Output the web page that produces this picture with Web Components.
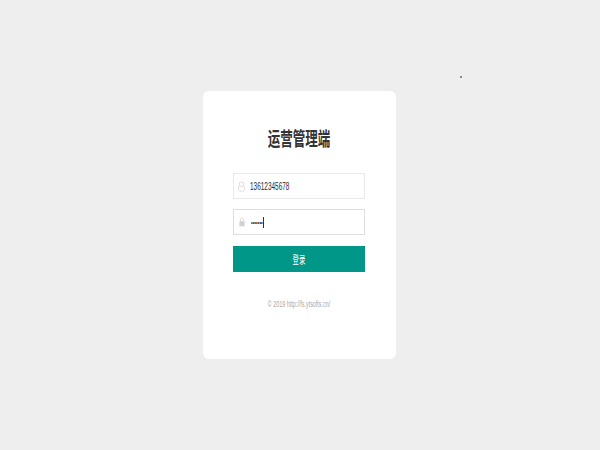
<!DOCTYPE html>
<html>
<head>
<meta charset="utf-8">
<style>
  html, body { margin: 0; height: 100%; background: #eeeeee; }
  body { display: flex; align-items: center; justify-content: center; font-family: "Liberation Sans", "Noto Sans CJK SC", sans-serif; }
</style>
</head>
<body>
<login-card>
  <login-field value="13612345678">
    <svg slot="icon" width="7" height="11" viewBox="0 0 8 12" fill="none" stroke="#d9d9de" stroke-width="1"><circle cx="4" cy="3.4" r="2.6"/><path d="M1.6 5.4C.8 6.4.5 7.6.5 9c0 1.700 1 2.500 3.500 2.500S7.500 10.700 7.500 9c0-1.400-.3-2.600-1.100-3.600"/></svg>
  </login-field>
  <login-field value="•••••••" focused>
    <svg slot="icon" width="6" height="10" viewBox="0 0 7 11"><path d="M1.800 5V2.800a1.700 1.700 0 0 1 3.400 0V5" fill="none" stroke="#e3d3d6" stroke-width="1"/><rect x=".5" y="4.500" width="6" height="6" rx=".6" fill="#d2cfd0"/></svg>
  </login-field>
  <login-button>登录</login-button>
</login-card>
<speck-dot></speck-dot>

<script>
class LoginCard extends HTMLElement {
  constructor() {
    super();
    this.attachShadow({ mode: 'open' });
    this.shadowRoot.innerHTML = `
      <style>
        :host {
          display: block;
          box-sizing: border-box;
          width: 193px;
          height: 268px;
          padding: 36px 31px 0 30px;
          background: #fff;
          border-radius: 6px;
          margin-left: -1px;
        }
        h1 {
          margin: 0 0 20px;
          height: 26px;
          line-height: 26px;
          text-align: center;
          font-size: 19px;
          font-weight: bold;
          color: #333;
          transform: scaleX(.66);
          white-space: nowrap;
        }
        .stack { display: flex; flex-direction: column; gap: 10px; }
        footer {
          margin-top: 26px;
          text-align: center;
          font-size: 9px;
          line-height: 12px;
          color: #a8a8a8;
          white-space: nowrap;
          transform: scaleX(.6);
        }
      </style>
      <h1>运营管理端</h1>
      <div class="stack"><slot></slot></div>
      <footer>© 2019 http://fs.ytsofts.cn/</footer>
    `;
  }
}

class LoginField extends HTMLElement {
  constructor() {
    super();
    this.attachShadow({ mode: 'open' });
    this.shadowRoot.innerHTML = `
      <style>
        :host {
          display: flex;
          align-items: center;
          box-sizing: border-box;
          height: 26px;
          padding-left: 3px;
          border: 1px solid #e9e9e9;
          background: #fff;
          color: #2b2b2b;
          font-size: 11px;
        }
        :host([focused]) { border-color: #dedede; }
        .icon { display: flex; width: 9px; justify-content: center; margin-right: 4px; }
        .val { display: inline-block; transform: scaleX(.585); transform-origin: left center; white-space: nowrap; }
        :host([focused]) .val { font-size: 8px; transform: scaleX(.6); margin-left: 1px; }
        .caret { width: 1px; height: 11px; background: #333; margin-left: -8px; display: none; }
        :host([focused]) .caret { display: block; }
      </style>
      <span class="icon"><slot name="icon"></slot></span>
      <span class="val"></span>
      <span class="caret"></span>
    `;
  }
  connectedCallback() {
    this.shadowRoot.querySelector('.val').textContent = this.getAttribute('value');
  }
}

class LoginButton extends HTMLElement {
  constructor() {
    super();
    this.attachShadow({ mode: 'open' });
    this.shadowRoot.innerHTML = `
      <style>
        :host {
          display: flex;
          align-items: center;
          justify-content: center;
          height: 26px;
          margin-top: 1px;
          background: #009688;
          color: #fff;
          font-size: 11px;
        }
        span { display: inline-block; transform: scaleX(.58); }
      </style>
      <span><slot></slot></span>
    `;
  }
}

class SpeckDot extends HTMLElement {
  constructor() {
    super();
    this.attachShadow({ mode: 'open' });
    this.shadowRoot.innerHTML = `
      <style>
        :host { position: absolute; left: 460px; top: 76px; width: 2px; height: 2px; background: #8a8a8a; }
      </style>
    `;
  }
}

customElements.define('login-card', LoginCard);
customElements.define('login-field', LoginField);
customElements.define('login-button', LoginButton);
customElements.define('speck-dot', SpeckDot);
</script>
</body>
</html>
